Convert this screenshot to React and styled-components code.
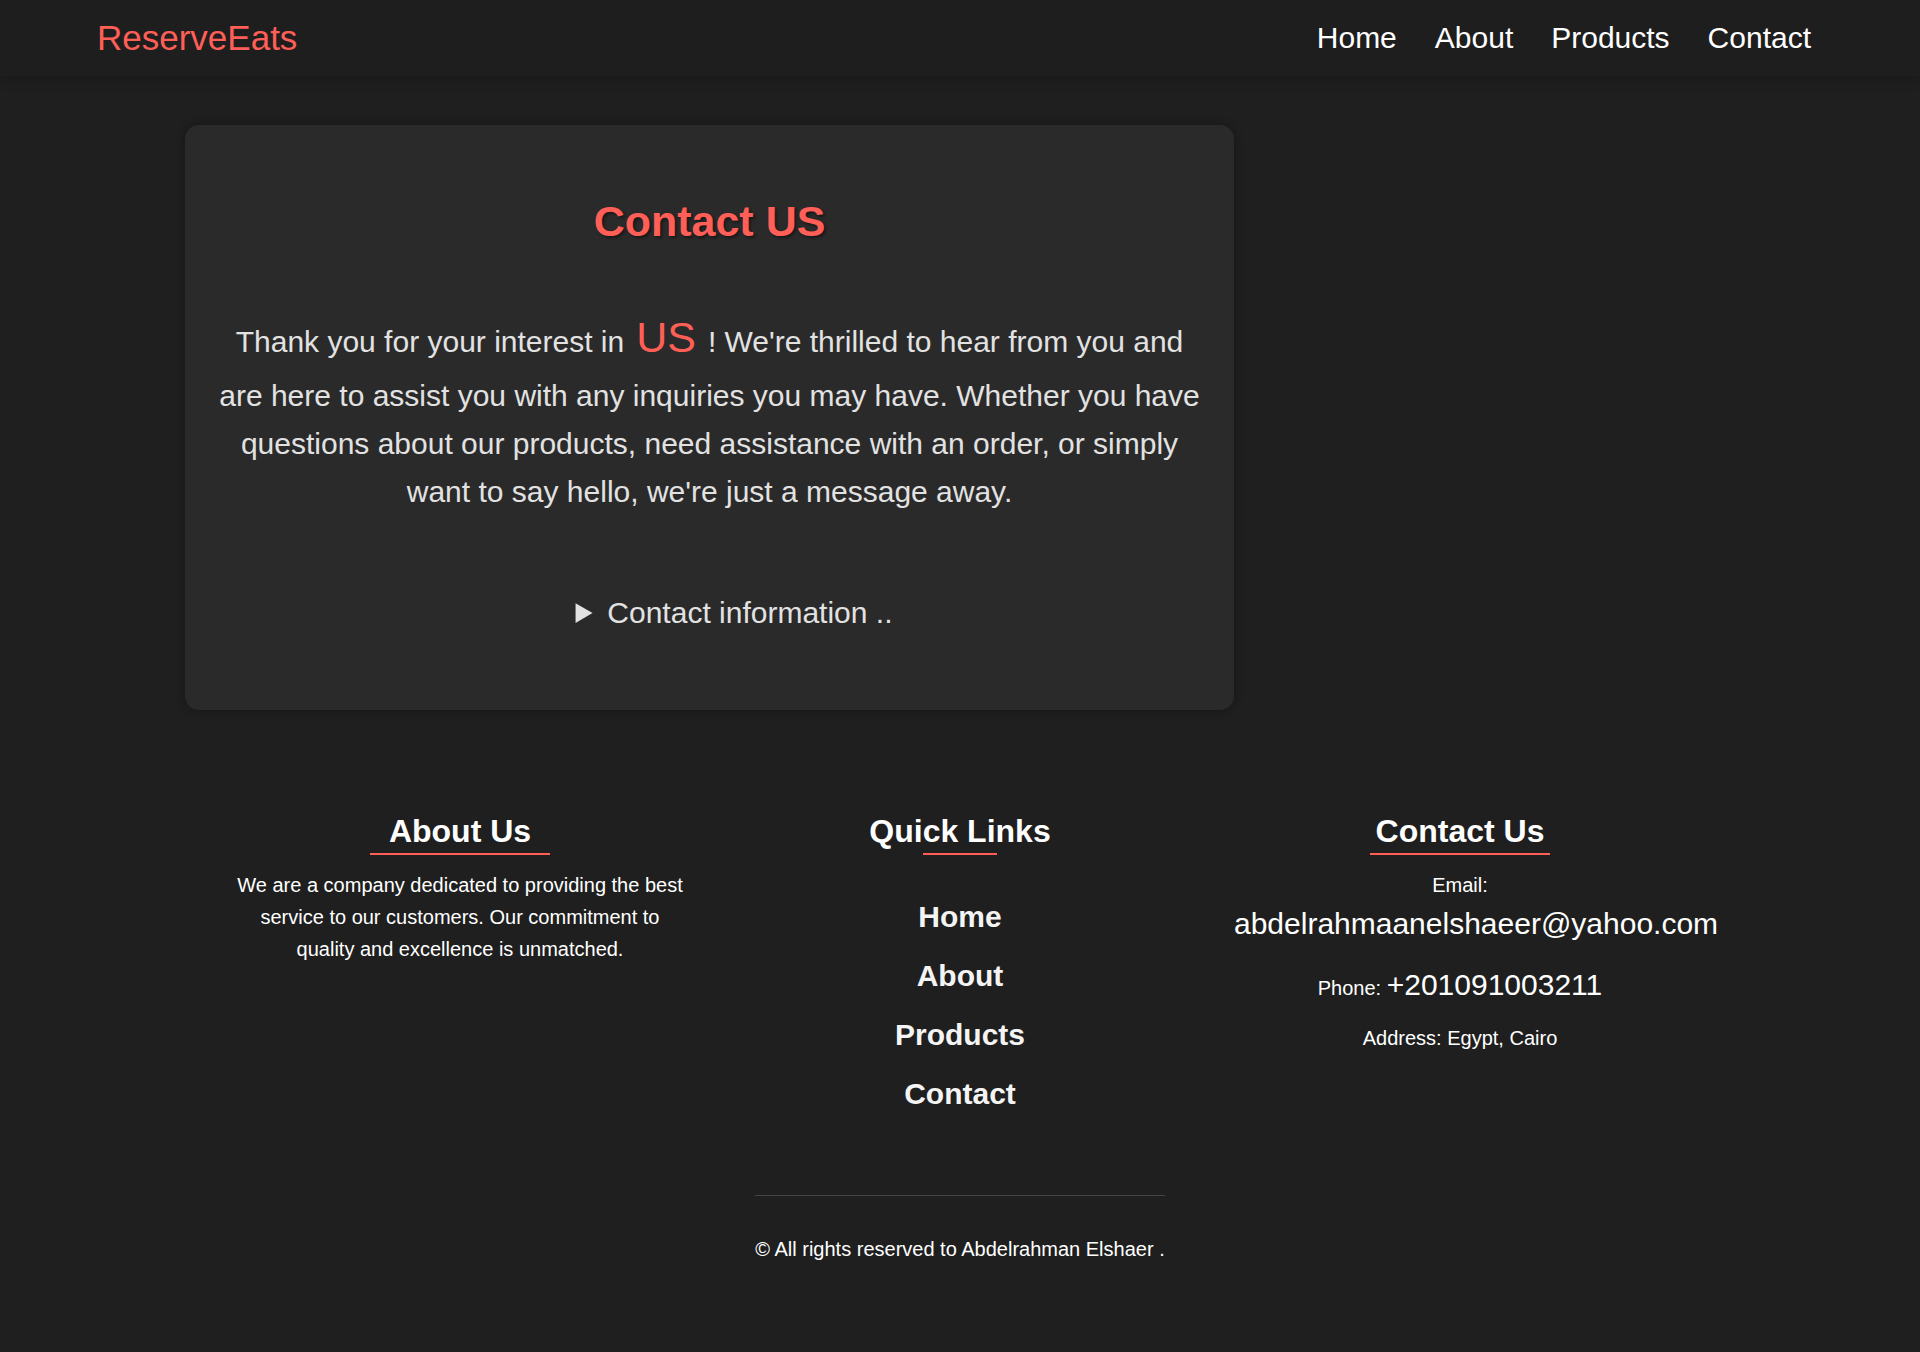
import React from "react";
import styled, { createGlobalStyle } from "styled-components";

const RED = "#ff5f57";

const GlobalStyle = createGlobalStyle`
  body {
    margin: 0;
    background: #1f1f1f;
    font-family: "Liberation Sans", Arial, sans-serif;
    color: #fff;
  }
  a {
    color: inherit;
    text-decoration: none;
  }
`;

const Header = styled.header`
  height: 76px;
  display: flex;
  align-items: center;
  justify-content: space-between;
  padding: 0 109px 0 97px;
  background: #1e1e1e;
  box-shadow: 0 2px 12px rgba(0, 0, 0, 0.25);
`;

const Logo = styled.a`
  font-size: 35px;
  color: ${RED};
`;

const Nav = styled.nav`
  display: flex;
  gap: 38px;

  a {
    font-size: 30px;
    color: #fff;
  }
`;

const Main = styled.main`
  padding: 49px 0 0 185px;
`;

const Card = styled.section`
  width: 1049px;
  box-sizing: border-box;
  padding: 72px 30px 80px;
  background: #2a2a2a;
  border-radius: 14px;
  box-shadow: 0 0 10px rgba(0, 0, 0, 0.3);
  text-align: center;
`;

const Title = styled.h1`
  margin: 0 0 57px;
  font-size: 43px;
  color: ${RED};
  text-shadow: 2px 2px 3px rgba(0, 0, 0, 0.45);
`;

const Intro = styled.p`
  margin: 0 0 80px;
  font-size: 30px;
  line-height: 1.6;
  color: #e2e2e2;

  span {
    font-size: 43px;
    color: ${RED};
  }
`;

const Details = styled.details`
  padding-left: 49px;
  font-size: 30px;
  color: #e2e2e2;

  summary {
    cursor: pointer;
  }
`;

const Footer = styled.footer`
  padding: 103px 0 97px;
  text-align: center;
`;

const Columns = styled.div`
  width: 1500px;
  margin: 0 auto;
  display: grid;
  grid-template-columns: repeat(3, 1fr);
`;

const Column = styled.div`
  padding: 0 20px;
  display: flex;
  flex-direction: column;
  align-items: center;
  min-width: 0;
`;

const ColTitle = styled.h3`
  margin: 0;
  font-size: 32px;
  font-weight: bold;
  color: #fff;
`;

const Underline = styled.span`
  display: block;
  width: ${(p) => p.$w}px;
  height: 2px;
  margin-top: 3px;
  background: ${RED};
`;

const Text = styled.p`
  margin: ${(p) => p.$m || "14px 0 0"};
  font-size: 20px;
  line-height: 32px;
  color: #fff;
`;

const LinkList = styled.div`
  margin-top: 44px;
  display: flex;
  flex-direction: column;
  align-items: center;
  gap: 24px;

  a {
    font-size: 30px;
    line-height: 35px;
    font-weight: bold;
    color: #f4f4f4;
  }
`;

const Big = styled.a`
  display: block;
  font-size: 30px;
  margin: 6px 0 0 4px;
  white-space: nowrap;
  align-self: flex-start;
`;

const Phone = styled.p`
  margin: 20px 0 0;
  font-size: 20px;
  line-height: 48px;

  span {
    font-size: 30px;
  }
`;

const Copy = styled.div`
  display: inline-block;
  margin-top: 84px;
  padding-top: 42px;
  border-top: 1px solid #454545;
  font-size: 20px;
`;

export default function App() {
  return (
    <>
      <GlobalStyle />
      <Header>
        <Logo href="#">ReserveEats</Logo>
        <Nav>
          <a href="#">Home</a>
          <a href="#">About</a>
          <a href="#">Products</a>
          <a href="#">Contact</a>
        </Nav>
      </Header>

      <Main>
        <Card>
          <Title>Contact US</Title>
          <Intro>
            Thank you for your interest in<span> US </span>! We're thrilled to
            hear from you and are here to assist you with any inquiries you may
            have. Whether you have questions about our products, need assistance
            with an order, or simply want to say hello, we're just a message
            away.
          </Intro>
          <Details>
            <summary>Contact information ..</summary>
          </Details>
        </Card>
      </Main>

      <Footer>
        <Columns>
          <Column>
            <ColTitle>About Us</ColTitle>
            <Underline $w={180} />
            <Text>
              We are a company dedicated to providing the best service to our
              customers. Our commitment to quality and excellence is unmatched.
            </Text>
          </Column>
          <Column>
            <ColTitle>Quick Links</ColTitle>
            <Underline $w={74} />
            <LinkList>
              <a href="#">Home</a>
              <a href="#">About</a>
              <a href="#">Products</a>
              <a href="#">Contact</a>
            </LinkList>
          </Column>
          <Column>
            <ColTitle>Contact Us</ColTitle>
            <Underline $w={180} />
            <Text>Email:</Text>
            <Big href="#">abdelrahmaanelshaeer@yahoo.com</Big>
            <Phone>
              Phone: <span>+201091003211</span>
            </Phone>
            <Text $m="10px 0 0">Address: Egypt, Cairo</Text>
          </Column>
        </Columns>
        <Copy>© All rights reserved to Abdelrahman Elshaer .</Copy>
      </Footer>
    </>
  );
}
